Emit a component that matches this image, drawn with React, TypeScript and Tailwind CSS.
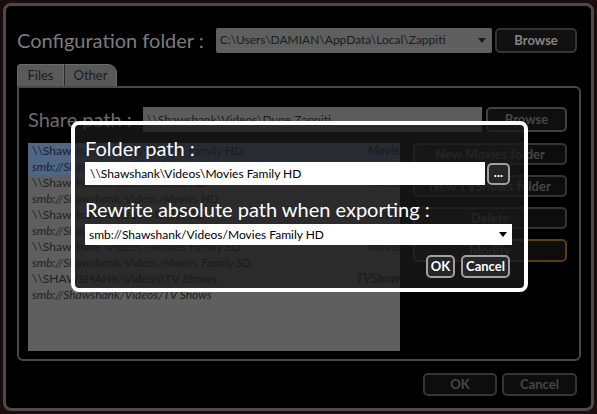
import type { ReactNode } from "react";

type Folder = { unc: string; smb: string; kind: string; selected?: boolean };

const folders: Folder[] = [
  {
    unc: "\\\\Shawshank\\Videos\\Movies Family HD",
    smb: "smb://Shawshank/Videos/Movies Family HD",
    kind: "Movies",
    selected: true,
  },
  { unc: "\\\\Shawshank\\Videos\\Movies HD", smb: "smb://Shawshank/Videos/Movies HD", kind: "Movies" },
  { unc: "\\\\Shawshank\\Videos\\Movies SD", smb: "smb://Shawshank/Videos/Movies SD", kind: "Movies" },
  {
    unc: "\\\\Shawshank\\Videos\\Movies Family SD",
    smb: "smb://Shawshank/Videos/Movies Family SD",
    kind: "Movies",
  },
  { unc: "\\\\SHAWSHANK\\Videos\\TV Shows", smb: "smb://Shawshank/Videos/TV Shows", kind: "TVShows" },
];

function Caret({ className = "" }: { className?: string }) {
  return (
    <svg width="8" height="5" viewBox="0 0 8 5" className={className}>
      <path d="M0 0h8L4 5z" fill="currentColor" />
    </svg>
  );
}

// buttons of the window behind the dialog (dimmed)
function BackButton({ children, accent = false, className = "" }: { children: ReactNode; accent?: boolean; className?: string }) {
  return (
    <button
      className={
        "whitespace-nowrap rounded-[5px] border-2 bg-[#0d0d0d] text-[13px] font-bold leading-none " +
        (accent ? "border-[#5a3d0e] text-[#464646] " : "border-[#343434] text-[#464646] ") +
        className
      }
    >
      {children}
    </button>
  );
}

function DialogButton({ children, className = "" }: { children: ReactNode; className?: string }) {
  return (
    <button
      className={
        "rounded-[5px] border-2 border-[#a0a0a0] bg-[#262626] text-[13px] font-bold leading-none text-white " + className
      }
    >
      {children}
    </button>
  );
}

export default function App() {
  return (
    <div className="relative h-[414px] w-[597px] overflow-hidden bg-[#1b0d0b] p-[3px] font-['Lato',sans-serif]">
      <div className="flex h-full flex-col rounded-[8px] border-[3px] border-[#4b4b4b] bg-black pl-[11px] pr-[10px] pt-[21px]">
        {/* configuration folder */}
        <div className="mr-[4px] flex h-[26px] items-center">
          <div className="w-[199px] whitespace-nowrap text-[20px] leading-[26px] text-[#7c7c7c]">Configuration folder :</div>
          <div className="flex h-[25px] w-[277px] items-center rounded-[2px] bg-[#5f5f5f] pl-[4px] pr-[6px] text-[12px] text-[#1c1c1c]">
            <span className="flex-1 truncate">C:\Users\DAMIAN\AppData\Local\Zappiti</span>
            <Caret className="text-[#1c1c1c]" />
          </div>
          <BackButton className="ml-[3px] h-[25px] w-[82px] border-[#4e4e4e] bg-[#111] text-[#858585]">
            Browse
          </BackButton>
        </div>

        {/* tabs */}
        <div className="mt-[11px] flex h-[22px] items-end">
          <div className="flex h-[22px] w-[47px] items-center justify-center rounded-tl-[4px] border border-b-0 border-[#6a6a6a] bg-[#5a5a5a] text-[13px] text-[#1c1c1c]">
            Files
          </div>
          <div className="flex h-[22px] w-[53px] items-center justify-center rounded-tr-[9px] border border-b-0 border-l-[#2a2a2a] border-[#6a6a6a] bg-[#585858] text-[13px] text-[#1c1c1c]">
            Other
          </div>
        </div>

        {/* tab panel */}
        <div className="flex h-[275px] flex-col rounded-b-[6px] rounded-tr-[6px] border-2 border-[#484848] pl-[9px] pr-[11px] pt-[19px]">
          <div className="flex h-[25px] items-center">
            <div className="w-[115px] whitespace-nowrap text-[20px] leading-[25px] text-[#6c6c6c]">Share path :</div>
            <div className="flex h-[25px] w-[339px] items-center bg-[#5c5c5c] pl-[4px] text-[12px] text-[#1c1c1c]">
              \\Shawshank\Videos\Dune Zappiti
            </div>
            <BackButton className="ml-[4px] h-[25px] w-[81px] border-[#404040] bg-[#0f0f0f] text-[#5a5a5a]">
              Browse
            </BackButton>
          </div>

          <div className="mt-[11px] flex gap-[13px]">
            {/* folder list */}
            <div className="h-[208px] w-[372px] overflow-hidden bg-[#5f5f5f] text-[12px] leading-[16px] text-[#1e1e1e]">
              <div className="w-[377px]">
                {folders.map((f) => (
                  <div key={f.unc} className={f.selected ? "bg-[#4f6685] text-[#17202c]" : ""}>
                    <div className="flex justify-between pl-[4px]">
                      <span>{f.unc}</span>
                      <span className="text-[12.5px] font-bold italic text-[#2a2a2a]">{f.kind}</span>
                    </div>
                    <div className="pl-[4px] italic">{f.smb}</div>
                  </div>
                ))}
              </div>
            </div>

            {/* folder actions */}
            <div className="flex w-[154px] flex-col gap-[10px]">
              <BackButton className="h-[22px]">New Movies folder</BackButton>
              <BackButton className="h-[22px]">New TVShows folder</BackButton>
              <BackButton className="h-[22px]">Delete</BackButton>
              <BackButton accent className="h-[23px]">
                Modify
              </BackButton>
            </div>
          </div>
        </div>

        {/* window buttons */}
        <div className="mr-[4px] mt-[12px] flex justify-end gap-[5px]">
          <BackButton className="h-[23px] w-[74px] border-[#3a3a3a] text-[#5e5e5e]">OK</BackButton>
          <BackButton className="h-[23px] w-[75px] border-[#3a3a3a] text-[#5e5e5e]">Cancel</BackButton>
        </div>
      </div>

      {/* edit folder dialog */}
      <div className="absolute left-[71px] top-[121px] flex h-[171px] w-[457px] flex-col rounded-[8px] border-4 border-white bg-[rgba(26,26,26,0.76)] pl-[10px] pr-[12px] pt-[13px] text-white">
        <div className="text-[20px] leading-[20px]">Folder path :</div>
        <div className="mt-[4px] flex items-center gap-[2px]">
          <div className="h-[23px] w-[400px] bg-white pl-[5px] text-[12px] leading-[23px] text-black">
            \\Shawshank\Videos\Movies Family HD
          </div>
          <DialogButton className="h-[22px] w-[23px] pb-[2px]">...</DialogButton>
        </div>

        <div className="mt-[14px] text-[20px] leading-[20px]">Rewrite absolute path when exporting :</div>
        <div className="mt-[5px] flex h-[21px] items-center bg-white pl-[4px] pr-[5px] text-[12px] text-black">
          <span className="flex-1">smb://Shawshank/Videos/Movies Family HD</span>
          <Caret />
        </div>

        <div className="mr-[2px] mt-[10px] flex justify-end gap-[6px]">
          <DialogButton className="h-[23px] w-[29px]">OK</DialogButton>
          <DialogButton className="h-[23px] w-[49px]">Cancel</DialogButton>
        </div>
      </div>
    </div>
  );
}
